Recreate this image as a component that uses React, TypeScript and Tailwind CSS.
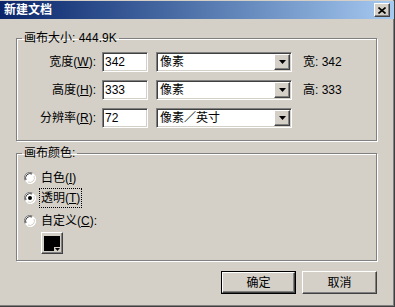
const FONT = { fontFamily: '"Liberation Sans", "Noto Sans CJK SC", sans-serif' };

const sunken =
  "border-t border-l border-b border-r border-t-[#808080] border-l-[#808080] border-b-white border-r-white shadow-[inset_1px_1px_0_#404040,inset_-1px_-1px_0_#d4d0c8]";
const raised =
  "border border-t-white border-l-white border-b-[#404040] border-r-[#404040] shadow-[inset_-1px_-1px_0_#808080]";
const etched =
  "border border-[#808080] shadow-[inset_1px_1px_0_#fff,1px_1px_0_#fff]";

function Arrow() {
  return (
    <svg width="7" height="4" viewBox="0 0 7 4">
      <path d="M0 0h7L3.5 4z" fill="#000" />
    </svg>
  );
}

function Select({ value }: { value: string }) {
  return (
    <div className={`ml-[8px] w-[136px] h-[20px] bg-white flex items-center ${sunken}`}>
      <span className="flex-1 pl-[3px] text-[12px] leading-none text-black">{value}</span>
      <div className={`w-[16px] h-[16px] mr-[1px] bg-[#d4d0c8] flex items-center justify-center ${raised}`}>
        <Arrow />
      </div>
    </div>
  );
}

function Row({ label, keyChar, num, unit, side }: { label: string; keyChar: string; num: string; unit: string; side?: string }) {
  return (
    <div className="flex items-center h-[20px]">
      <div className="w-[79px] text-right text-[12px] text-black">
        {label}(<u>{keyChar}</u>):
      </div>
      <div className={`ml-[6px] w-[46px] h-[20px] bg-white flex items-center pl-[2px] text-[12px] text-black ${sunken}`}>
        {num}
      </div>
      <Select value={unit} />
      {side && <div className="ml-[11px] text-[12px] text-black">{side}</div>}
    </div>
  );
}

function Radio({ checked }: { checked?: boolean }) {
  return (
    <svg width="12" height="12" viewBox="0 0 12 12">
      <circle cx="6" cy="6" r="5.5" fill="#fff" />
      <path d="M1 8.5A5.5 5.5 0 0 1 8.5 1" stroke="#808080" strokeWidth="1" fill="none" />
      <path d="M2 8A4.5 4.5 0 0 1 8 2" stroke="#404040" strokeWidth="1" fill="none" />
      <path d="M3.5 11A5.5 5.5 0 0 0 11 3.5" stroke="#fff" strokeWidth="1" fill="none" />
      <path d="M4 10A4.5 4.5 0 0 0 10 4" stroke="#d4d0c8" strokeWidth="1" fill="none" />
      {checked && <circle cx="6" cy="6" r="2" fill="#000" />}
    </svg>
  );
}

export default function App() {
  return (
    <div
      style={FONT}
      className="w-[395px] h-[307px] bg-[#d4d0c8] pt-[1px] flex flex-col border-r border-b border-[#404040] shadow-[inset_-1px_-1px_0_#808080] overflow-hidden"
    >
      {/* title bar */}
      <div className="h-[18px] bg-gradient-to-r from-[#0a246a] to-[#a6caf0] flex items-center pl-[4px] pr-[4px]">
        <span className="flex-1 text-[12px] font-bold text-white leading-none">新建文档</span>
        <div className={`w-[16px] h-[14px] bg-[#d4d0c8] flex items-center justify-center ${raised}`}>
          <svg width="8" height="7" viewBox="0 0 8 7">
            <path d="M0.5 0.5L7.5 6.5M7.5 0.5L0.5 6.5" stroke="#000" strokeWidth="1.6" />
          </svg>
        </div>
      </div>

      <div className="flex flex-col pl-[16px] pr-[17px]">
        {/* canvas size */}
        <fieldset className={`mt-[12px] pb-[12px] ${etched}`}>
          <legend className="ml-[5px] px-[2px] text-[12px] leading-[14px] text-black">画布大小: 444.9K</legend>
          <div className="pt-[7px] flex flex-col gap-[8px]">
            <Row label="宽度" keyChar="W" num="342" unit="像素" side="宽:  342" />
            <Row label="高度" keyChar="H" num="333" unit="像素" side="高:  333" />
            <Row label="分辨率" keyChar="R" num="72" unit="像素／英寸" />
          </div>
        </fieldset>

        {/* canvas colour */}
        <fieldset className={`mt-[5px] pb-[6px] ${etched}`}>
          <legend className="ml-[5px] px-[2px] text-[12px] leading-[14px] text-black">画布颜色:</legend>
          <div className="pt-[8px] pl-[7px] flex flex-col text-[12px] text-black">
            <div className="flex items-center h-[20px] gap-[5px]">
              <Radio />
              <span>白色(<u>I</u>)</span>
            </div>
            <div className="flex items-center h-[20px] gap-[4px]">
              <Radio checked />
              <span className="px-[1px] outline-1 outline-dotted outline-black">透明(<u>T</u>)</span>
            </div>
            <div className="flex items-center h-[20px] gap-[5px] mt-[3px]">
              <Radio />
              <span>自定义(<u>C</u>):</span>
            </div>
            <div className={`relative ml-[17px] mt-[1px] w-[22px] h-[22px] flex items-center justify-center ${raised}`}>
              <div className="w-[16px] h-[15px] bg-black" />
              <div className="absolute right-[1px] bottom-[1px] w-[7px] h-[5px] bg-[#d4d0c8] flex items-center justify-center">
                <svg width="5" height="3" viewBox="0 0 5 3">
                  <path d="M0 0h5L2.5 3z" fill="#000" />
                </svg>
              </div>
            </div>
          </div>
        </fieldset>

        {/* buttons */}
        <div className="mt-[10px] flex justify-end gap-[6px]">
          <div className="w-[75px] h-[23px] border border-black">
            <div className={`w-full h-full flex items-center justify-center text-[12px] text-black ${raised}`}>确定</div>
          </div>
          <div className={`w-[75px] h-[23px] flex items-center justify-center text-[12px] text-black ${raised}`}>取消</div>
        </div>
      </div>
    </div>
  );
}
